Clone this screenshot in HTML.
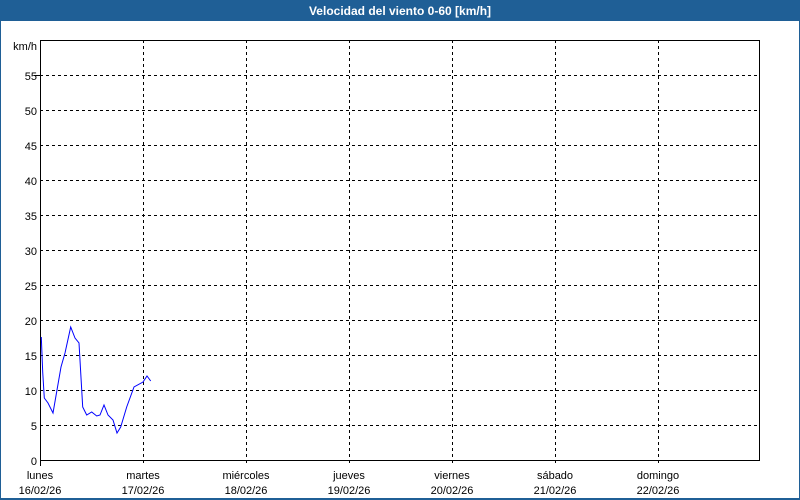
<!DOCTYPE html>
<html><head><style>
body{margin:0;width:800px;height:500px;overflow:hidden;background:#fff;font-family:"Liberation Sans",sans-serif;}
</style></head><body>
<svg width="800" height="500" xmlns="http://www.w3.org/2000/svg" style="display:block">
<rect x="0" y="0" width="800" height="500" fill="#1f5f96"/>
<rect x="1" y="21" width="798" height="477" fill="#fff"/>
<text x="400" y="15" fill="#fff" font-size="12" font-weight="bold" text-anchor="middle" font-family="Liberation Sans">Velocidad del viento 0-60 [km/h]</text>
<g stroke="#000" stroke-width="1" stroke-dasharray="3,3" shape-rendering="crispEdges">
<line x1="40" x2="760" y1="75.5" y2="75.5"/><line x1="40" x2="760" y1="110.5" y2="110.5"/><line x1="40" x2="760" y1="145.5" y2="145.5"/><line x1="40" x2="760" y1="180.5" y2="180.5"/><line x1="40" x2="760" y1="215.5" y2="215.5"/><line x1="40" x2="760" y1="250.5" y2="250.5"/><line x1="40" x2="760" y1="285.5" y2="285.5"/><line x1="40" x2="760" y1="320.5" y2="320.5"/><line x1="40" x2="760" y1="355.5" y2="355.5"/><line x1="40" x2="760" y1="390.5" y2="390.5"/><line x1="40" x2="760" y1="425.5" y2="425.5"/>
<line x1="143.5" x2="143.5" y1="40" y2="466"/><line x1="246.5" x2="246.5" y1="40" y2="466"/><line x1="349.5" x2="349.5" y1="40" y2="466"/><line x1="452.5" x2="452.5" y1="40" y2="466"/><line x1="555.5" x2="555.5" y1="40" y2="466"/><line x1="658.5" x2="658.5" y1="40" y2="466"/>
</g>
<rect x="40.5" y="40.5" width="719" height="420" fill="none" stroke="#000" shape-rendering="crispEdges"/>
<line x1="40.5" x2="40.5" y1="460" y2="466" stroke="#000" shape-rendering="crispEdges"/>
<line x1="34" x2="40" y1="75.5" y2="75.5" stroke="#000"/>
<g font-size="11" fill="#000" text-anchor="end">
<text x="37" y="50">km/h</text>
<text x="37" y="80">55</text><text x="37" y="115">50</text><text x="37" y="150">45</text><text x="37" y="185">40</text><text x="37" y="220">35</text><text x="37" y="255">30</text><text x="37" y="290">25</text><text x="37" y="325">20</text><text x="37" y="360">15</text><text x="37" y="395">10</text><text x="37" y="430">5</text><text x="37" y="465">0</text>
</g>
<g font-size="11" fill="#000" text-anchor="middle">
<text x="40" y="479">lunes</text><text x="40" y="494">16/02/26</text>
<text x="143" y="479">martes</text><text x="143" y="494">17/02/26</text>
<text x="246" y="479">miércoles</text><text x="246" y="494">18/02/26</text>
<text x="349" y="479">jueves</text><text x="349" y="494">19/02/26</text>
<text x="452" y="479">viernes</text><text x="452" y="494">20/02/26</text>
<text x="555" y="479">sábado</text><text x="555" y="494">21/02/26</text>
<text x="658" y="479">domingo</text><text x="658" y="494">22/02/26</text>
</g>
<polyline fill="none" stroke="#0000ff" stroke-width="1" points="41.3,337 42.7,372 44.3,398 48,403 53,413 57,390 61,367 65,353 70.7,327 75,338 79,343 82.7,407 86.7,415 91.7,412 96.7,416 100,415 104,405 108,415 113,420 117,433 120.7,427 126.7,407 134,387 143,382 147,376 150.7,381"/>
</svg>
</body></html>
